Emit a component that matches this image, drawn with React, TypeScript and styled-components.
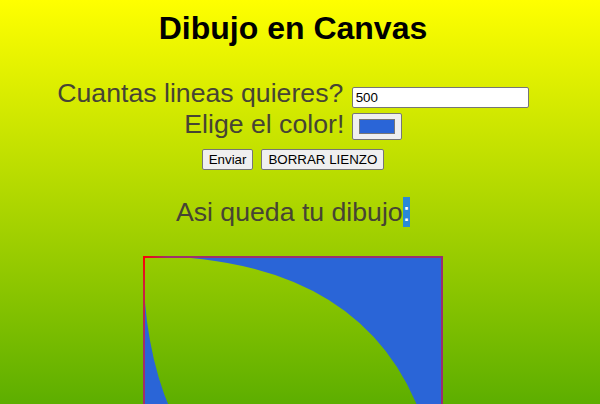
import React from "react";
import styled, { createGlobalStyle } from "styled-components";

const Global = createGlobalStyle`
  html {
    height: 100%;
    overflow: hidden;
    background: linear-gradient(to bottom, #ffff00 0px, #008000 635px);
  }
  body {
    margin: 0;
  }
`;

const Page = styled.main`
  width: 570px;
  margin-left: 8px;
  padding-top: 10px;
  text-align: center;
  font-family: "Liberation Sans", Arial, sans-serif;
  color: rgb(70, 68, 52);
`;

const Title = styled.h1`
  margin: 0;
  font-size: 32px;
  line-height: 37px;
  font-weight: bold;
  color: #000;
`;

const Form = styled.form`
  margin-top: 30.5px;
  font-size: 26.67px;
  line-height: normal;
`;

const Line = styled.div`
  white-space: nowrap;
`;

const TextField = styled.input`
  box-sizing: border-box;
  width: 177px;
  height: 21px;
  margin: 0 0 0 1px;
  padding: 1px 3px;
  border: 1px solid #767676;
  border-radius: 2px;
  background: #fff;
  color: #000;
  font: 13.33px "Liberation Sans", Arial, sans-serif;
  vertical-align: baseline;
`;

const ColorField = styled.span`
  display: inline-flex;
  box-sizing: border-box;
  width: 50px;
  height: 27px;
  padding: 5px 6px;
  border: 1px solid #767676;
  border-radius: 2px;
  background: #efefef;
  vertical-align: -1px;
`;

const Swatch = styled.span<{ $color: string }>`
  flex: 1;
  border: 1px solid #777;
  background: ${(p) => p.$color};
`;

const Buttons = styled.div`
  display: flex;
  justify-content: center;
  gap: 8px;
  margin-top: 9px;
`;

const Button = styled.button`
  box-sizing: border-box;
  height: 21px;
  margin: 0;
  padding: 1px 6px;
  border: 1px solid #767676;
  border-radius: 2px;
  background: #efefef;
  color: #000;
  font: 13.33px "Liberation Sans", Arial, sans-serif;
`;

const Caption = styled.p`
  margin: 27.5px 0 0;
  font-size: 26.67px;
  line-height: normal;
`;

const Selected = styled.span`
  background: #2a89d8;
  color: #fff;
`;

const Drawing = styled.svg`
  display: block;
  margin: 28px auto 0;
`;

const BLUE = "#2a65d7";

export default function App() {
  return (
    <>
      <Global />
      <Page>
        <Title>Dibujo en Canvas</Title>
        <Form onSubmit={(e) => e.preventDefault()}>
          <Line>
            Cuantas lineas quieres? <TextField type="text" defaultValue="500" />
          </Line>
          <Line>
            Elige el color!{" "}
            <ColorField>
              <Swatch $color={BLUE} />
            </ColorField>
          </Line>
          <Buttons>
            <Button type="button">Enviar</Button>
            <Button type="button">BORRAR LIENZO</Button>
          </Buttons>
        </Form>
        <Caption>
          Asi queda tu dibujo<Selected>:</Selected>
        </Caption>
        <Drawing width="300" height="300" viewBox="0 0 300 300">
          <defs>
            <linearGradient id="edgeTop" x1="0" y1="0" x2="1" y2="0">
              <stop offset="0" stopColor="#ff0000" />
              <stop offset="0.08" stopColor="#a0306c" />
              <stop offset="1" stopColor="#9a2f70" />
            </linearGradient>
            <linearGradient id="edgeLeft" x1="0" y1="0" x2="0" y2="1">
              <stop offset="0" stopColor="#ff0000" />
              <stop offset="0.1" stopColor="#d01e3c" />
              <stop offset="0.3" stopColor="#a0306c" />
              <stop offset="1" stopColor="#9a2f70" />
            </linearGradient>
          </defs>
          <path d="M0 0 L300 0 L300 300 Q300 0 0 0 Z" fill={BLUE} />
          <path d="M0 0 L0 300 L300 300 Q0 300 0 0 Z" fill={BLUE} />
          <rect x="298" y="0" width="2" height="300" fill="#9a2f70" />
          <rect x="0" y="298" width="300" height="2" fill="#9a2f70" />
          <rect x="0" y="0" width="300" height="2" fill="url(#edgeTop)" />
          <rect x="0" y="0" width="2" height="300" fill="url(#edgeLeft)" />
        </Drawing>
      </Page>
    </>
  );
}
